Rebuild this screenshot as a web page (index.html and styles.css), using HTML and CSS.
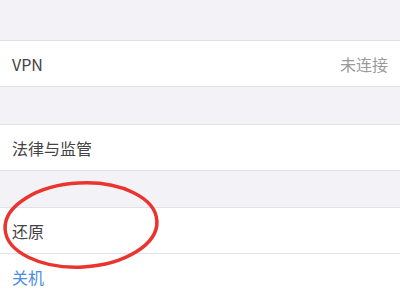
FILE: index.html
```html
<!DOCTYPE html>
<html lang="zh">
<head>
<meta charset="utf-8">
<link rel="stylesheet" href="styles.css">
</head>
<body>
<div class="page">
  <div class="gap gap-top"></div>
  <div class="row"><span class="label">VPN</span><span class="value">未连接</span></div>
  <div class="gap gap-mid"></div>
  <div class="row"><span class="label">法律与监管</span></div>
  <div class="gap gap-low"></div>
  <div class="row"><span class="label">还原</span></div>
  <div class="footer"><span class="link">关机</span></div>
  <svg class="circle" width="400" height="300" viewBox="0 0 400 300">
    <ellipse cx="81" cy="225" rx="76" ry="42" transform="rotate(-3 81 225)" fill="none" stroke="#ea342e" stroke-width="3.5"/>
  </svg>
</div>
</body>
</html>
```

FILE: styles.css
```css
html, body {
  margin: 0;
  padding: 0;
  background: #ffffff;
}
.page {
  position: relative;
  width: 400px;
  height: 300px;
  overflow: hidden;
  background: #f3f3f7;
  font-family: "Noto Sans CJK SC", "Noto Sans", sans-serif;
}
.gap-top { height: 40px; }
.gap-mid { height: 37px; }
.gap-low { height: 36px; }
.row {
  height: 45px;
  background: #ffffff;
  border-top: 1px solid #e2e2e6;
  border-bottom: 1px solid #e2e2e6;
  display: flex;
  align-items: center;
  justify-content: space-between;
  padding: 0 12px;
  font-size: 16px;
}
.label { color: #444444; }
.value { color: #9a9a9a; }
.footer {
  height: 46px;
  background: #ffffff;
  display: flex;
  align-items: center;
  padding: 0 12px;
  font-size: 16px;
}
.link { color: #4a8fe0; }
.circle {
  position: absolute;
  left: 0;
  top: 0;
  pointer-events: none;
}
```
